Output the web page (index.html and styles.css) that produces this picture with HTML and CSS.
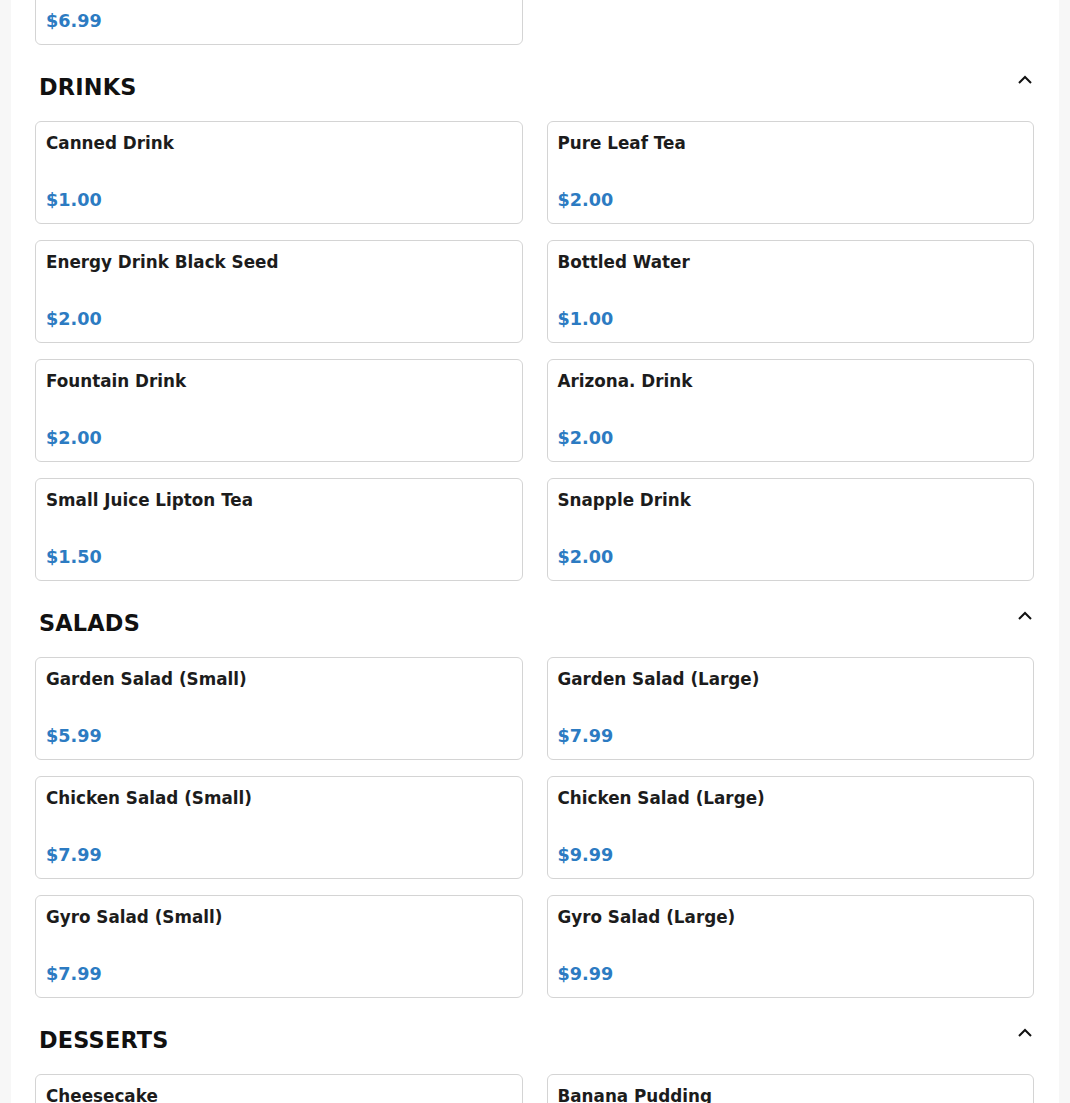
FILE: index.html
```html
<!DOCTYPE html>
<html lang="en">
<head>
<meta charset="utf-8">
<title>Menu</title>
<link rel="stylesheet" href="styles.css">
</head>
<body>
<main class="menu">
  <div class="grid grid-first">
    <div class="card"><div class="name">Gyro Wrap</div><div class="price">$6.99</div></div>
  </div>

  <section class="section">
    <div class="section-head">
      <h2 class="section-title">DRINKS</h2>
      <svg class="chev" width="16" height="16" viewBox="0 0 16 16"><path d="M2 10 L8 4 L14 10" fill="none" stroke="#111" stroke-width="2"/></svg>
    </div>
    <div class="grid">
      <div class="card"><div class="name">Canned Drink</div><div class="price">$1.00</div></div>
      <div class="card"><div class="name">Pure Leaf Tea</div><div class="price">$2.00</div></div>
      <div class="card"><div class="name">Energy Drink Black Seed</div><div class="price">$2.00</div></div>
      <div class="card"><div class="name">Bottled Water</div><div class="price">$1.00</div></div>
      <div class="card"><div class="name">Fountain Drink</div><div class="price">$2.00</div></div>
      <div class="card"><div class="name">Arizona. Drink</div><div class="price">$2.00</div></div>
      <div class="card"><div class="name">Small Juice Lipton Tea</div><div class="price">$1.50</div></div>
      <div class="card"><div class="name">Snapple Drink</div><div class="price">$2.00</div></div>
    </div>
  </section>

  <section class="section">
    <div class="section-head">
      <h2 class="section-title">SALADS</h2>
      <svg class="chev" width="16" height="16" viewBox="0 0 16 16"><path d="M2 10 L8 4 L14 10" fill="none" stroke="#111" stroke-width="2"/></svg>
    </div>
    <div class="grid">
      <div class="card"><div class="name">Garden Salad (Small)</div><div class="price">$5.99</div></div>
      <div class="card"><div class="name">Garden Salad (Large)</div><div class="price">$7.99</div></div>
      <div class="card"><div class="name">Chicken Salad (Small)</div><div class="price">$7.99</div></div>
      <div class="card"><div class="name">Chicken Salad (Large)</div><div class="price">$9.99</div></div>
      <div class="card"><div class="name">Gyro Salad (Small)</div><div class="price">$7.99</div></div>
      <div class="card"><div class="name">Gyro Salad (Large)</div><div class="price">$9.99</div></div>
    </div>
  </section>

  <section class="section">
    <div class="section-head">
      <h2 class="section-title">DESSERTS</h2>
      <svg class="chev" width="16" height="16" viewBox="0 0 16 16"><path d="M2 10 L8 4 L14 10" fill="none" stroke="#111" stroke-width="2"/></svg>
    </div>
    <div class="grid">
      <div class="card"><div class="name">Cheesecake</div><div class="price">$3.99</div></div>
      <div class="card"><div class="name">Banana Pudding</div><div class="price">$3.99</div></div>
    </div>
  </section>
</main>
</body>
</html>
```

FILE: styles.css
```css
html, body {
  margin: 0;
  padding: 0;
  background: #f7f7f7;
  font-family: "DejaVu Sans", "Liberation Sans", sans-serif;
}

.menu {
  width: 1048px;
  margin: 0 auto;
  background: #ffffff;
  padding: 0 25px 40px 24px;
  box-sizing: border-box;
  overflow: hidden;
  min-height: 1200px;
}

.grid {
  display: grid;
  grid-template-columns: 1fr 1fr;
  column-gap: 24px;
  row-gap: 16px;
}

.grid-first {
  margin-top: -58px;
}

.section {
  margin-top: 29px;
}

.section-head {
  display: flex;
  justify-content: space-between;
  align-items: flex-start;
  padding: 0 1px 0 4px;
  margin-bottom: 21px;
}

.section-title {
  margin: 0;
  font-size: 22.4px;
  font-weight: bold;
  color: #111111;
  line-height: normal;
  letter-spacing: 0.2px;
}

.chev {
  display: block;
  margin-top: -1px;
}

.card {
  height: 103px;
  box-sizing: border-box;
  border: 1px solid #d4d4d4;
  border-radius: 6px;
  background: #ffffff;
  padding: 11px 10px 13px;
  display: flex;
  flex-direction: column;
  justify-content: space-between;
}

.name {
  font-size: 16.8px;
  font-weight: bold;
  color: #1c1c1c;
  line-height: normal;
}

.price {
  font-size: 17.6px;
  font-weight: bold;
  color: #2c7bc2;
  line-height: normal;
}
```
